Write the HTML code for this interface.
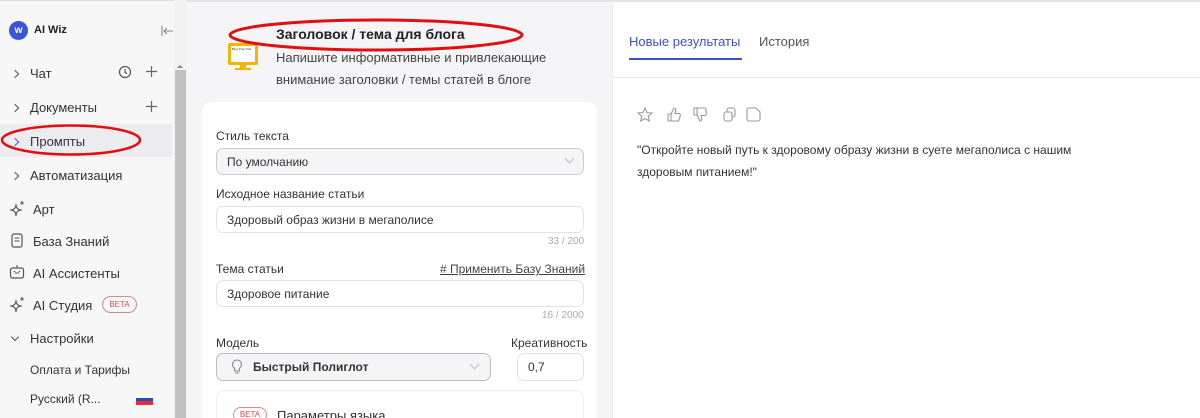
<!DOCTYPE html>
<html style="overflow:hidden;height:418px"><head><meta charset="utf-8"><style>
*{box-sizing:border-box;margin:0;padding:0}
body{width:1200px;height:418px;overflow:hidden;background:#fff;font-family:"Liberation Sans","Noto Sans CJK SC",sans-serif;color:#333;position:relative;font-size:13px}
.abs{position:absolute}
.sb{left:0;top:0;width:174px;height:418px;background:#f7f7f8;border-top:1px solid #ddd}
.scroll{left:174px;top:0;width:13px;height:418px;background:#f1f1f1}
.thumb{left:175px;top:70px;width:11px;height:348px;background:#c1c1c1}
.mid{left:187px;top:0;width:425px;height:418px;background:#f5f5f7;border-top:2px solid #e3e3e3}
.right{left:612px;top:0;width:588px;height:418px;background:#fff;border-top:2px solid #e3e3e3;border-left:1px solid #eee}
.item{position:absolute;left:12px;font-size:13px;color:#333}
.chev{display:inline-block;width:6px;height:6px;border-right:1.3px solid #555;border-bottom:1.3px solid #555;transform:rotate(-45deg);margin-right:12px;position:relative;top:-1px}
.card{left:202px;top:102px;width:395px;height:316px;background:#fff;border-radius:10px 10px 0 0}
.lbl{position:absolute;font-size:12px;color:#333}
.inp{position:absolute;border:1px solid #e2e2e2;border-radius:7px;background:#fff;font-size:12px;color:#333;padding-left:10px;display:flex;align-items:center}
.cnt{position:absolute;font-size:10px;color:#aaa}
</style></head><body>
<div class="abs sb"></div>
<div class="abs scroll"></div><div class="abs thumb"></div>
<div class="abs" style="left:177px;top:62px;border:3px solid transparent;border-bottom:3px solid #888"></div>
<div class="abs" style="left:9px;top:21px;width:19px;height:19px;border-radius:50%;background:#3c54d8;color:#fff;font-size:10px;font-weight:bold;text-align:center;line-height:19px">w</div>
<div class="abs" style="left:34px;top:24px;font-size:11px;font-weight:bold;color:#222">AI Wiz</div>
<svg class="abs" style="left:161px;top:25px" width="13" height="12" fill="none" stroke="#888" stroke-width="1.1"><path d="M1 1v10M12 6H3M6 3L3 6l3 3"/></svg>
<div class="item" style="top:66px"><span class="chev"></span>Чат</div>
<svg class="abs" style="left:118px;top:65px" width="14" height="14"><circle cx="7" cy="7" r="5.5" fill="none" stroke="#555" stroke-width="1.2"/><path d="M7 4v3.3l2 1.3" fill="none" stroke="#555" stroke-width="1.2"/></svg>
<svg class="abs" style="left:146px;top:66px" width="11" height="11" stroke="#666" stroke-width="1.2"><path d="M5.5 0v11M0 5.5h11"/></svg>
<div class="item" style="top:100px"><span class="chev"></span>Документы</div>
<svg class="abs" style="left:146px;top:101px" width="11" height="11" stroke="#666" stroke-width="1.2"><path d="M5.5 0v11M0 5.5h11"/></svg>
<div class="abs" style="left:0;top:124px;width:172px;height:33px;background:#ececee"></div>
<div class="item" style="top:134px"><span class="chev" style="border-color:#4a5bd8"></span>Промпты</div>
<svg class="abs" style="left:0;top:122px" width="145" height="36"><ellipse cx="71" cy="18" rx="69" ry="14.5" fill="none" stroke="#e01010" stroke-width="2.5"/></svg>
<div class="item" style="top:168px"><span class="chev"></span>Автоматизация</div>
<svg class="abs" style="left:8px;top:200px" width="18" height="18" fill="none" stroke="#555" stroke-width="1.1"><path d="M8 4c0 4 2 6 6 6-4 0-6 2-6 6 0-4-2-6-6-6 4 0 6-2 6-6z"/><path d="M14 1v4M12 3h4"/></svg>
<div class="item" style="top:202px;left:33px">Арт</div>
<svg class="abs" style="left:11px;top:233px" width="12" height="15"><rect x="1" y="1" width="10" height="13" rx="2" fill="none" stroke="#555" stroke-width="1.2"/><path d="M3.5 5h5M3.5 8h5" stroke="#555" stroke-width="1.1"/></svg>
<div class="item" style="top:234px;left:33px">База Знаний</div>
<svg class="abs" style="left:9px;top:264px" width="16" height="16"><rect x="1.5" y="4" width="13" height="10" rx="2" fill="none" stroke="#555" stroke-width="1.2"/><path d="M8 1v3M6 9h4" stroke="#555" stroke-width="1.1"/><circle cx="5.5" cy="7.5" r=".8" fill="#555"/><circle cx="10.5" cy="7.5" r=".8" fill="#555"/></svg>
<div class="item" style="top:266px;left:33px">AI Ассистенты</div>
<svg class="abs" style="left:8px;top:296px" width="18" height="18" fill="none" stroke="#555" stroke-width="1.1"><path d="M8 4c0 4 2 6 6 6-4 0-6 2-6 6 0-4-2-6-6-6 4 0 6-2 6-6z"/><path d="M14 1v4M12 3h4"/></svg>
<div class="item" style="top:298px;left:33px">AI Студия</div>
<div class="abs" style="left:102px;top:296px;width:35px;height:17px;border:1px solid #d88;border-radius:9px;font-size:8px;color:#c55;text-align:center;line-height:15px">BETA</div>
<div class="item" style="top:331px"><span class="chev" style="transform:rotate(45deg);top:-3px"></span>Настройки</div>
<div class="item" style="top:363px;left:30px;font-size:12px">Оплата и Тарифы</div>
<div class="item" style="top:392px;left:30px;font-size:12px">Русский (R...</div>
<div class="abs" style="left:136px;top:395px;width:17px;height:3px;background:#fff"></div>
<div class="abs" style="left:136px;top:398px;width:17px;height:3px;background:#2b47c8"></div>
<div class="abs" style="left:136px;top:401px;width:17px;height:4px;background:#e03030"></div>

<div class="abs mid"></div>
<div class="abs" style="left:228px;top:43px;width:30px;height:22px;background:#fff;border:3px solid #f4b400;border-radius:2px;font-size:3px;padding:1px">Blog Post Title</div>
<div class="abs" style="left:240px;top:65px;width:6px;height:3px;background:#f4b400"></div>
<div class="abs" style="left:235px;top:68px;width:16px;height:2px;background:#f4b400"></div>
<div class="abs" style="left:276px;top:26px;font-size:14px;font-weight:bold;color:#222">Заголовок / тема для блога</div>
<svg class="abs" style="left:228px;top:14px" width="310" height="42"><ellipse cx="148" cy="21" rx="146" ry="15" fill="none" stroke="#e01010" stroke-width="3"/></svg>
<div class="abs" style="left:276px;top:47px;font-size:13px;line-height:22px;color:#444">Напишите информативные и привлекающие<br>внимание заголовки / темы статей в блоге</div>
<div class="abs card"></div>
<div class="lbl" style="left:216px;top:129px">Стиль текста</div>
<div class="inp" style="left:216px;top:148px;width:368px;height:27px;background:#f5f5f7;border-color:#ccc">По умолчанию<span style="position:absolute;right:10px;top:6px;width:7px;height:7px;border-right:1px solid #bbb;border-bottom:1px solid #bbb;transform:rotate(45deg)"></span></div>
<div class="lbl" style="left:216px;top:187px">Исходное название статьи</div>
<div class="inp" style="left:216px;top:206px;width:368px;height:27px">Здоровый образ жизни в мегаполисе</div>
<div class="cnt" style="left:548px;top:236px">33 / 200</div>
<div class="lbl" style="left:216px;top:262px">Тема статьи</div>
<div class="lbl" style="left:440px;top:262px;text-decoration:underline;color:#444">#&nbsp;Применить Базу Знаний</div>
<div class="inp" style="left:216px;top:280px;width:368px;height:27px">Здоровое питание</div>
<div class="cnt" style="left:542px;top:310px">16 / 2000</div>
<div class="lbl" style="left:216px;top:336px">Модель</div>
<div class="lbl" style="left:511px;top:336px">Креативность</div>
<div class="inp" style="left:216px;top:353px;width:275px;height:28px;background:#f5f5f7;border-color:#bbb;padding-left:14px"><svg width="12" height="16" style="margin-right:10px" fill="none" stroke="#888" stroke-width="1.1"><path d="M6 1a4.5 4.5 0 00-2.5 8.2V12h5V9.2A4.5 4.5 0 006 1zM4 14h4"/></svg><b style="font-weight:bold;font-size:12px">Быстрый Полиглот</b><span style="position:absolute;right:12px;top:7px;width:7px;height:7px;border-right:1px solid #bbb;border-bottom:1px solid #bbb;transform:rotate(45deg)"></span></div>
<div class="inp" style="left:517px;top:353px;width:67px;height:28px">0,7</div>
<div class="abs" style="left:216px;top:390px;width:368px;height:40px;border:1px solid #eee;border-radius:8px"></div>
<div class="abs" style="left:233px;top:407px;width:34px;height:16px;border:1px solid #d88;border-radius:8px;font-size:8px;color:#c55;text-align:center;line-height:14px">BETA</div>
<div class="abs" style="left:277px;top:408px;font-size:13px">Параметры языка</div>

<div class="abs right"></div>
<div class="abs" style="left:629px;top:34px;font-size:13px;color:#3d4fc2">Новые результаты</div>
<div class="abs" style="left:629px;top:58px;width:113px;height:2px;background:#3d4fc2"></div>
<div class="abs" style="left:759px;top:34px;font-size:13px;color:#555">История</div>
<div class="abs" style="left:613px;top:77px;width:587px;height:1px;background:#e8e8e8"></div>
<svg class="abs" style="left:636px;top:106px" width="140" height="18" fill="none" stroke="#999" stroke-width="1.1">
<path d="M9 2l2.1 4.5 4.8.5-3.6 3.2 1 4.8L9 12.5 4.7 15l1-4.8L2.1 7l4.8-.5z"/>
<path d="M32 8h3v7h-3zM35 8l3-6c1.5 0 2 1 1.7 2.5L39 7.5h4c1 0 1.6 1 1.3 2l-1.3 4.5c-.3.7-.8 1-1.5 1H35"/>
<path d="M58 9h3V2h-3zM61 9l3 6c1.5 0 2-1 1.7-2.5L65 9.5h4c1 0 1.6-1 1.3-2L70 3c-.3-.7-.8-1-1.5-1H61"/>
<rect x="88" y="6" width="8" height="9" rx="2"/><path d="M91 6V4a2 2 0 012-2h4a2 2 0 012 2v5a2 2 0 01-2 2h-1"/>
<path d="M113 2h7l4 4v7a2 2 0 01-2 2h-9a2 2 0 01-2-2V4a2 2 0 012-2z"/>
</svg>
<div class="abs" style="left:637px;top:139px;font-size:12px;line-height:22px;color:#333">"Откройте новый путь к здоровому образу жизни в суете мегаполиса с нашим<br>здоровым питанием!"</div>
</body></html>
